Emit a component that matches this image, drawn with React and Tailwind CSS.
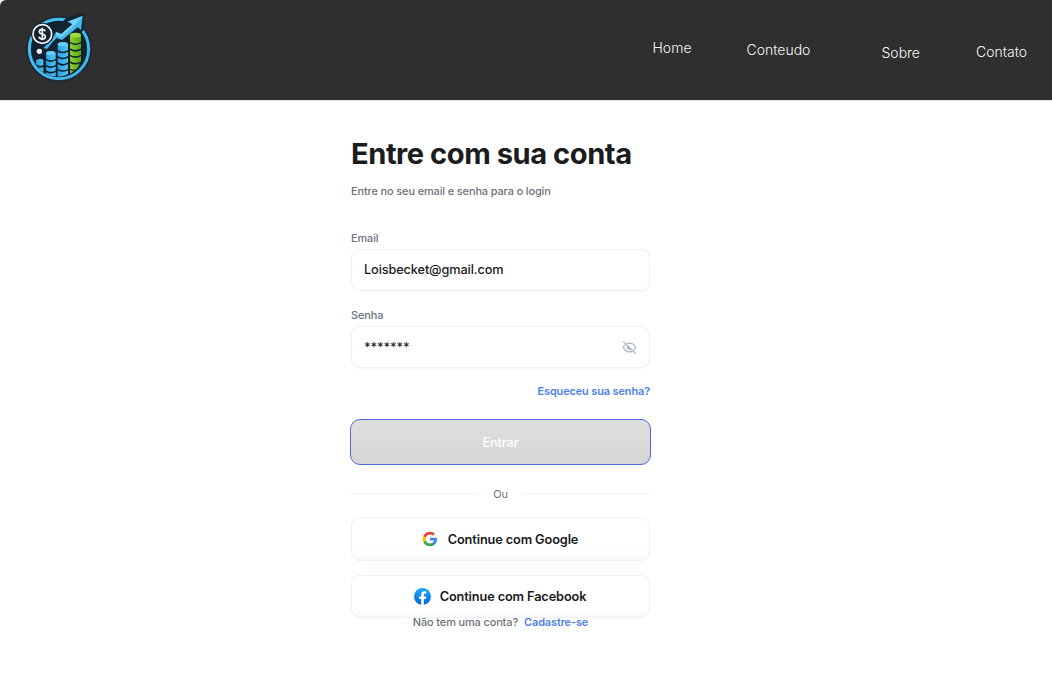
import React from 'react';

function Logo() {
  return (
    <svg className="mt-[10px] ml-5 h-[76px] w-[76px]" viewBox="0 0 228 228" fill="none">
      <defs>
        <linearGradient id="ring" x1="0" y1="0" x2="1" y2="1">
          <stop offset="0" stopColor="#49c5f3" />
          <stop offset="1" stopColor="#3fb2e8" />
        </linearGradient>
        <linearGradient id="blueBar" x1="0" y1="0" x2="1" y2="0">
          <stop offset="0" stopColor="#2f9ce0" />
          <stop offset="1" stopColor="#50c4f6" />
        </linearGradient>
        <linearGradient id="greenBar" x1="0" y1="0" x2="1" y2="0">
          <stop offset="0" stopColor="#8fd12b" />
          <stop offset="1" stopColor="#5aa916" />
        </linearGradient>
      </defs>
      <circle cx="117" cy="117" r="99" fill="#1b2a36" />
      <circle cx="117" cy="117" r="89" fill="#0e2232" stroke="url(#ring)" strokeWidth="9" />
      <path d="M142 22 178 10 193 11 192 58 180 72 158 66 82 130 60 122 92 66Z" fill="#142431" />
      <path d="M70 115 103 76 108 66 124 72 158 42 143 35 188 18 183 60 173 52 126 90 110 84 96 98 82 116Z" fill="#42b8ee" />
      <path d="M158 42 143 35 188 18 164 46 124 82 108 76 108 66 124 72Z" fill="#6fd3fa" />
      <g fill="url(#blueBar)">
        <path d="M48 151q10-9 22-2v16q-11 6-22-2z" />
        <path d="M57 171q6 3 13 0v14q-8-3-13-9z" />
        <path d="M78 129q14-12 29 0v17q-14 10-29 0z" />
        <path d="M78 151q14 10 29 0v13q-14 10-29 0z" />
        <path d="M78 169q14 10 29 0v12q-14 9-29 0z" />
        <path d="M78 186q14 9 29 0v13q-15 0-29-7z" />
        <path d="M113 102q15-12 31 0v18q-15 10-31 0z" />
        <path d="M113 125q15 10 31 0v13q-15 10-31 0z" />
        <path d="M113 143q15 10 31 0v14q-15 10-31 0z" />
        <path d="M113 162q15 10 31 0v14q-15 10-31 0z" />
        <path d="M113 181q15 9 31 0v11q-13 8-31 8z" />
      </g>
      <g fill="url(#greenBar)">
        <path d="M150 75q16-13 33 0v20q-16 11-33 0z" />
        <path d="M150 100q16 10 33 0v15q-16 10-33 0z" />
        <path d="M150 120q16 10 33 0v14q-16 10-33 0z" />
        <path d="M150 139q16 10 33 0v15q-16 10-33 0z" />
        <path d="M150 159q14 9 30 1l-9 16q-10 5-21 0z" />
        <path d="M150 180q6 3 13 1-6 7-13 10z" />
      </g>
      <ellipse cx="92.500" cy="129" rx="14" ry="6" fill="#62cdf7" />
      <ellipse cx="128.500" cy="102" rx="15" ry="6" fill="#62cdf7" />
      <ellipse cx="166.500" cy="75" rx="16" ry="7" fill="#a0dc3f" />
      <circle cx="67" cy="72" r="34" fill="#142431" />
      <circle cx="67" cy="72" r="28" fill="#17222d" stroke="#f3f6f8" strokeWidth="5" />
      <path d="M76 64q-2-6-9-6-9 0-9 7 0 5 9 7t9 8q0 7-9 7-8 0-10-7M67 53v38" stroke="#f3f6f8" strokeWidth="5" />
      <circle cx="58" cy="124" r="8" fill="#f3f6f8" />
    </svg>
  );
}

function EyeOff() {
  return (
    <svg className="h-[15px] w-[15px]" viewBox="0 0 15 15" fill="none" stroke="#acb5bb" strokeWidth="1.200">
      <path d="M4.600 3.600C6.400 2.900 8.200 2.900 10 3.500c1.800.7 3 2.200 3.500 4-.3 1.200-.9 2.200-1.800 2.900M3.300 4.400C2.300 5.200 1.700 6.300 1.400 7.500c.5 1.800 1.800 3.200 3.500 3.900 1.700.7 3.500.7 5.200 0" />
      <path d="M5.800 5.900c-.9 1-.8 2.300 0 3.100.9.900 2.400.9 3.300 0z" fill="#acb5bb" strokeWidth="0.600" />
      <path d="M1.300 1.300 13.500 13.500" />
    </svg>
  );
}

function GoogleIcon() {
  return (
    <svg className="h-4 w-4" viewBox="0 0 24 24">
      <path fill="#4285F4" d="M22.560 12.250c0-.78-.07-1.530-.2-2.250H12v4.260h5.920c-.26 1.370-1.040 2.530-2.210 3.310v2.770h3.570c2.080-1.920 3.280-4.740 3.280-8.090z" />
      <path fill="#34A853" d="M12 23c2.970 0 5.460-.98 7.280-2.660l-3.570-2.770c-.98.660-2.230 1.060-3.710 1.060-2.860 0-5.290-1.930-6.160-4.530H2.180v2.840C3.990 20.530 7.700 23 12 23z" />
      <path fill="#FBBC05" d="M5.840 14.090c-.22-.66-.35-1.360-.35-2.090s.13-1.430.35-2.090V7.070H2.180C1.430 8.550 1 10.220 1 12s.43 3.450 1.180 4.930l3.660-2.840z" />
      <path fill="#EA4335" d="M12 5.380c1.620 0 3.060.56 4.210 1.640l3.150-3.150C17.450 2.090 14.970 1 12 1 7.700 1 3.990 3.470 2.180 7.070l3.660 2.840c.87-2.600 3.300-4.530 6.160-4.530z" />
    </svg>
  );
}

function FacebookIcon() {
  return (
    <svg className="h-[17px] w-[17px]" viewBox="0 0 24 24">
      <defs>
        <linearGradient id="fb" x1="0" y1="0" x2="0" y2="1">
          <stop offset="0" stopColor="#18acfe" />
          <stop offset="1" stopColor="#0163e0" />
        </linearGradient>
      </defs>
      <circle cx="12" cy="12" r="12" fill="url(#fb)" />
      <path fill="#fff" d="m16.670 15.470.53-3.470h-3.330V9.750c0-.95.47-1.870 1.960-1.870h1.510V4.930s-1.370-.24-2.690-.24c-2.740 0-4.530 1.660-4.530 4.670V12H7.080v3.470h3.040v8.380a12.300 12.300 0 0 0 3.750 0v-8.380h2.800z" />
    </svg>
  );
}

const field =
  'flex h-[42px] items-center justify-between rounded-[9px] border border-[#edf1f3] bg-white px-3 text-[12.750px] font-medium tracking-[-0.010em] text-[#1a1c1e] shadow-[0_1px_2px_rgba(228,229,231,0.240)]';
const social =
  'flex items-center justify-center rounded-[9px] border border-[#eff0f6] bg-linear-to-b from-white from-75% to-[#fafafc] pr-px text-[12.750px] font-semibold tracking-[-0.010em] text-[#1a1c1e]';

export default function App() {
  return (
    <div className="h-[683px] w-[1052px] overflow-hidden bg-white font-['Inter',sans-serif]">
      <div className="bg-[#f4f4f4]">
        <header className="flex h-[100px] justify-between rounded-tl-[6px] bg-[#2f2f2f]">
          <Logo />
          <nav className="flex items-start pr-6 text-[14px] leading-5 font-[350] text-[#f8f8f8]">
            <a className="mt-[38px] w-[94px]">Home</a>
            <a className="mt-10 w-[135px]">Conteudo</a>
            <a className="mt-[43px] w-[94.500px]">Sobre</a>
            <a className="mt-[42px] w-[52px]">Contato</a>
          </nav>
        </header>
      </div>
      <div className="h-px bg-[#e4e4e4]" />
      <main className="ml-[351px] w-[299px] text-[10.930px] leading-4 tracking-[-0.010em] text-[#6c7278]">
        <h1 className="mt-[34px] text-[29.140px] leading-[38px] font-bold tracking-[-0.016em] whitespace-nowrap text-[#1a1c1e]">
          Entre com sua conta
        </h1>
        <p className="mt-[10px] font-[450]">Entre no seu email e senha para o login</p>
        <label className="mt-[31px] block font-[450]">Email</label>
        <div className={field + ' mt-[3px]'}>Loisbecket@gmail.com</div>
        <label className="mt-4 block font-[450]">Senha</label>
        <div className={field + ' mt-[3px]'}>
          <span className="pt-[2px]">*******</span>
          <EyeOff />
        </div>
        <a className="mt-[15px] block text-right font-semibold text-[#4d81e7]">Esqueceu sua senha?</a>
        <button className="-mx-px mt-5 block h-[46px] w-[301px] rounded-[10px] border border-[#4a69e2] bg-linear-to-b from-[#dedede] to-[#d6d6d6] pt-px text-[12.750px] font-medium tracking-[-0.010em] text-white">
          Entrar
        </button>
        <div className="mt-5 flex h-[17px] items-center justify-between">
          <span className="h-px w-[127px] bg-[#edf1f3]" />
          <span className="pt-px">Ou</span>
          <span className="h-px w-[127px] bg-[#edf1f3]" />
        </div>
        <button className={social + ' mt-[15px] h-[44px] w-full gap-[10px]'}>
          <GoogleIcon />
          <span className="pt-px">Continue com Google</span>
        </button>
        <button className={social + ' mt-[14px] h-[43px] w-full gap-[9px]'}>
          <FacebookIcon />
          Continue com Facebook
        </button>
        <p className="-mt-1 flex justify-center gap-[6px] font-[450]">
          <span>Não tem uma conta?</span>
          <a className="font-semibold text-[#4d81e7]">Cadastre-se</a>
        </p>
      </main>
    </div>
  );
}
